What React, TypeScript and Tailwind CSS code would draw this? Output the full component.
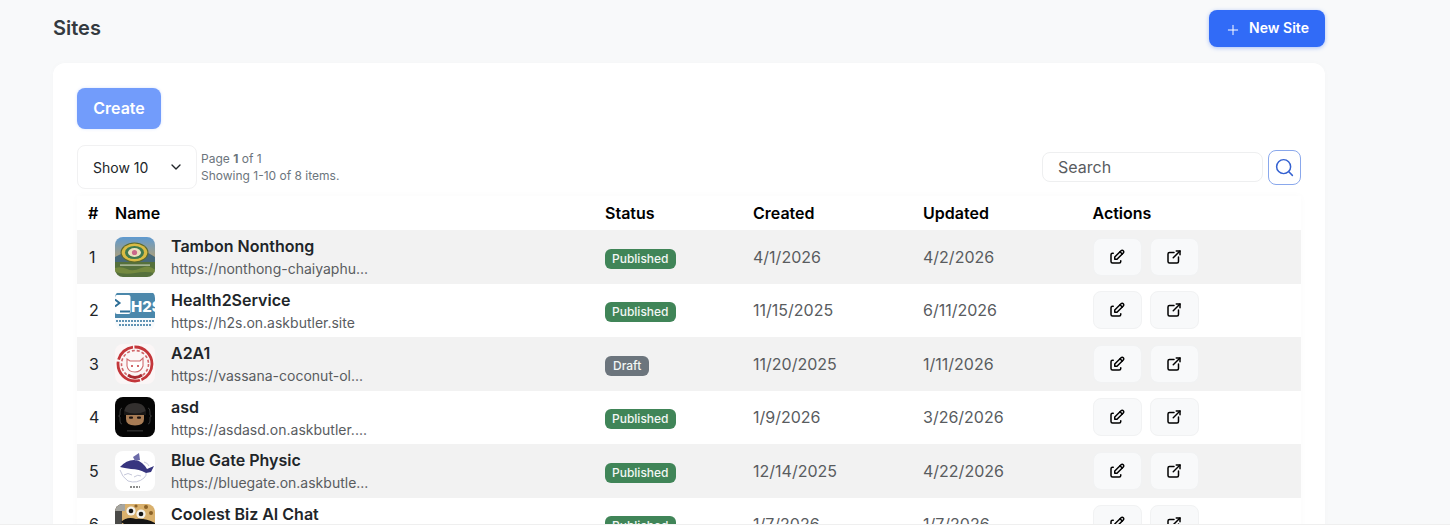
import { ChevronDown, Plus, Search } from "lucide-react";
import { TbEdit, TbExternalLink } from "react-icons/tb";
import type { ReactNode } from "react";

function TambonLogo() {
  return (
    <svg viewBox="0 0 40 40" className="h-full w-full">
      <defs>
        <linearGradient id="sky" x1="0" y1="0" x2="0" y2="1">
          <stop offset="0" stopColor="#5f9ad0" />
          <stop offset="0.6" stopColor="#a39f86" />
        </linearGradient>
      </defs>
      <rect width="40" height="30" fill="url(#sky)" />
      <path d="M0 20 L10 15 L20 18 L30 14 L40 20 V30 H0Z" fill="#47697a" />
      <rect y="25" width="40" height="15" fill="#55703c" />
      <path d="M0 31 Q6 29 12 32 T26 31 T40 33 V36 Q30 34 20 36 T0 35Z" fill="#74893f" />
      <ellipse cx="19.5" cy="15.5" rx="14" ry="10" fill="#5d6a2c" />
      <ellipse cx="19.5" cy="15.5" rx="12.8" ry="9" fill="#d9bb45" />
      <ellipse cx="19.5" cy="15.5" rx="9.5" ry="6.6" fill="#3f7a4f" />
      <ellipse cx="19.5" cy="15.5" rx="6.5" ry="4.4" fill="#e9e1bd" />
      <circle cx="19.5" cy="15.5" r="2.6" fill="#c9688a" />
      <rect x="5" y="27.5" width="30" height="1.2" fill="#e4e7d8" opacity="0.8" />
    </svg>
  );
}

function H2sLogo() {
  return (
    <svg viewBox="0 0 40 40" className="h-full w-full">
      <rect width="40" height="40" fill="#f7fafc" />
      <rect y="3" width="40" height="25" fill="#4a87ab" />
      <rect y="5" width="15.5" height="19" rx="2" fill="#ffffff" />
      <path d="M0 9.5 L4.5 13 L0 16.5" fill="none" stroke="#2f6f97" strokeWidth="2" />
      <rect x="5" y="20.5" width="10" height="2" fill="#2f6f97" />
      <text x="16" y="22" fontSize="15" fontWeight="800" fill="#ffffff" fontFamily="Inter, sans-serif">
        H2S
      </text>
      <path d="M1 31 H39 M4 35 H36" stroke="#5f93b4" strokeWidth="2" strokeDasharray="2 1" />
    </svg>
  );
}

function SealLogo() {
  return (
    <svg viewBox="0 0 40 40" className="h-full w-full">
      <rect width="40" height="40" fill="#fbf6f6" />
      <circle cx="20" cy="20" r="17" fill="none" stroke="#c3363a" strokeWidth="2.8" strokeDasharray="20 1.5 34 2" />
      <circle cx="20" cy="20" r="13.5" fill="none" stroke="#d0666a" strokeWidth="1.6" strokeDasharray="3 2" />
      <path d="M12 15 L15 17 H25 L28 14 L28 22 Q26 28 20 28 Q13 28 12 22Z" fill="#fff" stroke="#cf6a6e" strokeWidth="1.1" />
      <path d="M13 31 Q20 36 27 31" fill="none" stroke="#a92a30" strokeWidth="2.8" />
      <circle cx="17" cy="22" r="1" fill="#c3363a" />
      <circle cx="23" cy="22" r="1" fill="#c3363a" />
    </svg>
  );
}

function NinjaLogo() {
  return (
    <svg viewBox="0 0 40 40" className="h-full w-full">
      <rect width="40" height="40" fill="#050505" />
      <path d="M7 11 Q5 11 5 15 V18 L3.5 19 L5 20 V24 Q5 27 7 27 M33 11 Q35 11 35 15 V18 L36.5 19 L35 20 V24 Q35 27 33 27" fill="none" stroke="#3a3a3a" strokeWidth="1" />
      <path d="M9 17 Q9 6 20 6 Q31 6 31 17Z" fill="#33302f" />
      <path d="M11 17 H29 V22 Q29 28.5 20 28.5 Q11 28.5 11 22Z" fill="#a87c55" />
      <path d="M9 14 Q20 19 31 14 V18 H9Z" fill="#191716" />
      <rect x="14" y="19.5" width="4" height="2.2" rx="1" fill="#1a1210" />
      <rect x="22" y="19.5" width="4" height="2.2" rx="1" fill="#1a1210" />
      <rect x="12" y="33" width="16" height="1.6" fill="#2a2a2a" />
    </svg>
  );
}

function WhaleLogo() {
  return (
    <svg viewBox="0 0 40 40" className="h-full w-full">
      <rect width="40" height="40" fill="#ffffff" />
      <path d="M5 16 Q12 8 21 9 Q28 11 32 18 L39 15 L36 21 L31 22 Q24 18 16 18 Q9 17 5 16Z" fill="#37357f" />
      <path d="M18 6 L24 2 L25 9 L20 10Z" fill="#6c6ba8" />
      <path d="M5 19 Q7 26 13 30 Q22 33 29 27 Q32 24 31 22 M9 24 Q13 21 17 24 M19 26 Q23 23 26 25 M29 11 Q33 12 34 15" fill="none" stroke="#b7bad0" strokeWidth="0.8" />
      <path d="M15 36 H25" stroke="#666" strokeWidth="1.4" strokeDasharray="2 1" />
    </svg>
  );
}

function DogLogo() {
  return (
    <svg viewBox="0 0 40 40" className="h-full w-full">
      <rect width="40" height="40" fill="#d9b06c" />
      <rect width="7" height="40" fill="#4a4a48" />
      <path d="M0 0 H10 V7 H0Z" fill="#a5a5a0" />
      <circle cx="31" cy="3" r="2" fill="#8a6128" />
      <circle cx="36" cy="9" r="2" fill="#8a6128" />
      <circle cx="21" cy="2" r="1.6" fill="#8a6128" />
      <circle cx="16" cy="7" r="4.6" fill="#f3f1ea" />
      <circle cx="16" cy="7" r="2.3" fill="#161616" />
      <circle cx="26" cy="10" r="4.6" fill="#f3f1ea" />
      <circle cx="26" cy="10" r="2.3" fill="#161616" />
      <path d="M6 18 Q12 12 21 15 Q30 14 40 19 V22 Q30 22 21 21 Q12 23 6 18Z" fill="#141414" />
      <rect y="24" width="40" height="16" fill="#efe6d2" />
    </svg>
  );
}

function Badge({ label }: { label: string }) {
  const style = label === "Draft" ? "bg-[#6c757d] px-[8px]" : "bg-[#408558] px-[7px]";
  return (
    <span className={`inline-flex h-[20px] items-center rounded-[6px] text-[12px] font-medium leading-none text-[#f2f7f4] ${style}`}>
      {label}
    </span>
  );
}

function ActionButton({ children }: { children: ReactNode }) {
  return (
    <button className="flex h-[38px] w-[49px] items-center justify-center rounded-[8px] border border-[#f1f2f3] bg-[#f8f9fa] text-black">
      {children}
    </button>
  );
}

const sites = [
  { name: "Tambon Nonthong", url: "https://nonthong-chaiyaphu...", status: "Published", created: "4/1/2026", updated: "4/2/2026", logo: <TambonLogo /> },
  { name: "Health2Service", url: "https://h2s.on.askbutler.site", status: "Published", created: "11/15/2025", updated: "6/11/2026", logo: <H2sLogo /> },
  { name: "A2A1", url: "https://vassana-coconut-ol...", status: "Draft", created: "11/20/2025", updated: "1/11/2026", logo: <SealLogo /> },
  { name: "asd", url: "https://asdasd.on.askbutler....", status: "Published", created: "1/9/2026", updated: "3/26/2026", logo: <NinjaLogo /> },
  { name: "Blue Gate Physic", url: "https://bluegate.on.askbutle...", status: "Published", created: "12/14/2025", updated: "4/22/2026", logo: <WhaleLogo /> },
  { name: "Coolest Biz AI Chat", url: "https://coolest.on.askbutler...", status: "Published", created: "1/7/2026", updated: "1/7/2026", logo: <DogLogo /> },
];

const cols = "grid grid-cols-[38px_490px_148px_170px_169.5px_208.5px] items-center";

export default function App() {
  return (
    <div className="relative h-[525px] w-[1450px] overflow-hidden bg-[#f8f9fa] font-['Inter',sans-serif]">
      <div className="ml-[53px] w-[1272px] pt-[10px]">
        <div className="flex h-[37px] items-center justify-between">
          <h1 className="mb-[2px] text-[20px] font-semibold text-[#343a40]">Sites</h1>
          <button className="flex h-[37px] w-[116px] items-center justify-center gap-[8px] rounded-[8px] bg-[#316bf7] pb-[2px] text-[14px] font-semibold text-white shadow-[0_1px_4px_rgba(49,107,247,0.4)]">
            <Plus size={16} strokeWidth={1.5} className="mt-[5px]" />
            New Site
          </button>
        </div>

        <div className="mt-[16px] rounded-[12px] bg-white px-[24px] pt-[25px] shadow-[0_0_6px_rgba(0,0,0,0.02)]">
          <button className="h-[41px] w-[84px] rounded-[8px] bg-[#729cfb] pb-[2px] text-[16px] font-semibold text-white shadow-[0_0_3px_rgba(114,156,251,0.3)]">
            Create
          </button>

          <div className="mt-[16px] flex h-[44px] items-center">
            <div className="flex h-[44px] w-[120px] items-center justify-between rounded-[8px] border border-[#f1f1f2] pl-[15px] pr-[12px] text-[14px] text-[#212529]">
              Show 10
              <ChevronDown size={16} strokeWidth={2} />
            </div>
            <div className="ml-[4px] text-[12px] leading-[17px] text-[#6c757d]">
              <div>
                Page <b className="font-bold">1</b> of 1
              </div>
              <div>Showing 1-10 of 8 items.</div>
            </div>
            <div className="ml-auto flex items-center">
              <div className="flex h-[30px] w-[221px] items-center rounded-[8px] border border-[#eeeff0] pl-[15px] text-[16px] text-[#595c5f]">
                Search
              </div>
              <button className="ml-[4.5px] flex h-[35px] w-[33.5px] items-center justify-center rounded-[8px] border border-[#8aa8ec] text-[#3461d1]">
                <Search size={21} strokeWidth={1.7} />
              </button>
            </div>
          </div>

          <div className="mt-[7px] shadow-[0_0_8px_rgba(0,0,0,0.025)]">
            <div className={`${cols} h-[34px] bg-white text-[16px] font-semibold text-black`}>
              <div className="pl-[11px]">#</div>
              <div>Name</div>
              <div>Status</div>
              <div>Created</div>
              <div>Updated</div>
              <div>Actions</div>
            </div>
            {sites.map((site, i) => (
              <div key={site.name} className={`${cols} h-[53.5px] ${i % 2 === 0 ? "bg-[#f2f2f2]" : "bg-white"}`}>
                <div className="pl-[12px] text-[16px] text-[#212529]">{i + 1}</div>
                <div className="flex items-center">
                  <div className="h-[40px] w-[40px] overflow-hidden rounded-[8px]">{site.logo}</div>
                  <div className="ml-[16px]">
                    <div className="mb-[1px] text-[16px] font-semibold leading-[24px] text-[#212529]">{site.name}</div>
                    <div className="text-[14px] leading-[20px] text-[#595c5f]">{site.url}</div>
                  </div>
                </div>
                <div>
                  <Badge label={site.status} />
                </div>
                <div className="text-[16px] text-[#595c5f]">{site.created}</div>
                <div className="text-[16px] text-[#595c5f]">{site.updated}</div>
                <div className="flex gap-[8px]">
                  <ActionButton>
                    <TbEdit size={18} />
                  </ActionButton>
                  <ActionButton>
                    <TbExternalLink size={18} />
                  </ActionButton>
                </div>
              </div>
            ))}
          </div>
        </div>
      </div>
      <div className="absolute inset-x-0 bottom-0 h-px bg-[#efefef]" />
    </div>
  );
}
